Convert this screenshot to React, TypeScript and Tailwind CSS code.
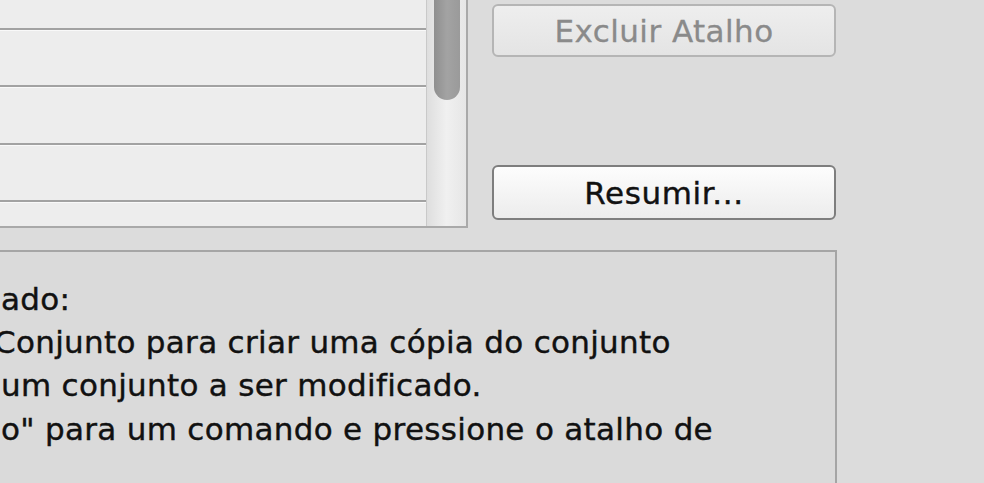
import React from "react";

const font = { fontFamily: '"DejaVu Sans", "Liberation Sans", sans-serif' };

function Row({ h, last }: { h: string; last?: boolean }) {
  return (
    <div
      className={`${h} w-full bg-[#ededed] ${last ? "" : "border-b-2 border-[#a2a2a2]"} border-t border-t-[#f9f9f9]`}
    />
  );
}

export default function App() {
  return (
    <div
      className="w-[984px] h-[483px] overflow-hidden bg-[#dcdcdc] flex flex-col"
      style={font}
    >
      <div className="flex h-[250px] shrink-0">
        {/* table */}
        <div className="w-[468px] h-[228px] flex border-r-2 border-b-2 border-[#a9a9a9] shrink-0">
          <div className="w-[426px] flex flex-col overflow-hidden">
            <div className="h-[30px] w-full bg-[#ededed] border-b-2 border-[#a2a2a2]" />
            <Row h="h-[58px]" />
            <Row h="h-[58px]" />
            <Row h="h-[58px]" />
            <Row h="h-[24px]" last />
          </div>
          <div className="w-[40px] h-full bg-gradient-to-r from-[#dedede] via-[#f0f0f0] to-[#e6e6e6] border-l border-[#c9c9c9] flex justify-center pl-[1px]">
            <div className="w-[26px] h-[100px] rounded-b-[13px] bg-gradient-to-r from-[#8f8f8f] via-[#a3a3a3] to-[#9a9a9a]" />
          </div>
        </div>
        {/* buttons */}
        <div className="ml-[24px] pt-[4px] flex flex-col">
          <div className="w-[344px] h-[53px] rounded-[6px] border-2 border-[#b5b5b5] bg-gradient-to-b from-[#eeeeee] to-[#e4e4e4] flex items-center justify-center pt-[2px] text-[31px] text-[#8a8a8a] tracking-[0.45px] [-webkit-text-stroke:0.3px_#8a8a8a]">
            Excluir Atalho
          </div>
          <div className="mt-[108px] w-[344px] h-[55px] rounded-[6px] border-2 border-[#7e7e7e] bg-gradient-to-b from-[#fdfdfd] to-[#ececec] flex items-center justify-center pt-[2px] text-[31px] text-[#111111] tracking-[0.6px] [-webkit-text-stroke:0.4px_#111111]">
            Resumir...
          </div>
        </div>
      </div>
      {/* group box */}
      <div className="ml-[-10px] w-[847px] h-[260px] border-t-2 border-r-2 border-[#a5a5a5] bg-[#dadada] pt-[26px] pl-[11px] text-[31px] leading-[43.2px] text-[#111111] tracking-[0.3px] [-webkit-text-stroke:0.4px_#111111] whitespace-nowrap shrink-0">
        <div>ado:</div>
        <div className="ml-[-7px]">Conjunto para criar uma cópia do conjunto</div>
        <div>um conjunto a ser modificado.</div>
        <div>o" para um comando e pressione o atalho de</div>
      </div>
    </div>
  );
}
